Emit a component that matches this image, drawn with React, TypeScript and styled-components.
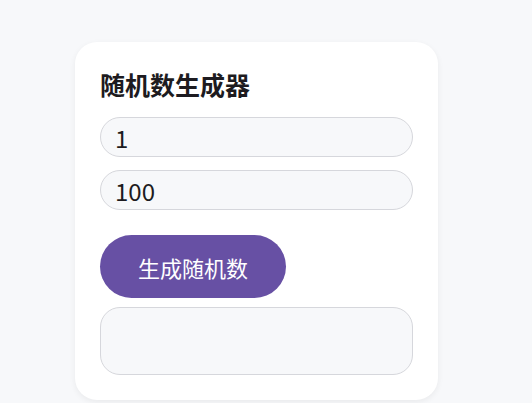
import React, { useState } from 'react';
import styled, { createGlobalStyle } from 'styled-components';

const GlobalStyle = createGlobalStyle`
    html, body {
        margin: 0;
        padding: 0;
        background: #f7f8fa;
        font-family: "Noto Sans CJK SC", "Noto Sans", sans-serif;
        color: #1d1b20;
    }
`;

const App = () => {
    const [min, setMin] = useState('1');
    const [max, setMax] = useState('100');
    const [result, setResult] = useState('');

    const generate = () => {
        const lo = parseInt(min, 10);
        const hi = parseInt(max, 10);
        if (isNaN(lo) || isNaN(hi)) return;
        setResult(String(Math.floor(Math.random() * (hi - lo + 1)) + lo));
    };

    return (
        <>
            <GlobalStyle />
            <Page>
                <Card>
                    <Title>随机数生成器</Title>
                    <NumberInput value={min} onChange={e => setMin(e.target.value)} />
                    <NumberInput value={max} onChange={e => setMax(e.target.value)} />
                    <GenerateButton onClick={generate}>生成随机数</GenerateButton>
                    <ResultBox>{result}</ResultBox>
                </Card>
            </Page>
        </>
    );
};

const Page = styled.div`
    padding: 42px 0 0 75px;
    min-height: 100vh;
    box-sizing: border-box;
`;

const Card = styled.div`
    width: 363px;
    box-sizing: border-box;
    background: #ffffff;
    border-radius: 22px;
    padding: 27px 25px 25px 25px;
    display: flex;
    flex-direction: column;
    box-shadow: 0 2px 6px rgba(0, 0, 0, 0.06);
`;

const Title = styled.h1`
    margin: 0 0 18px 0;
    font-size: 25px;
    line-height: 30px;
    font-weight: 700;
    color: #1d1b20;
`;

const NumberInput = styled.input`
    height: 40px;
    box-sizing: border-box;
    border: 1.5px solid #d6d7dc;
    border-radius: 20px;
    background: #f7f8fa;
    padding: 0 14px;
    font-family: inherit;
    font-size: 24px;
    color: #1d1b20;
    outline: none;
    & + & {
        margin-top: 13px;
    }
`;

const GenerateButton = styled.button`
    align-self: flex-start;
    margin-top: 25px;
    width: 186px;
    height: 63px;
    border: none;
    border-radius: 32px;
    background: #6750a4;
    color: #ffffff;
    font-family: inherit;
    font-size: 22px;
    font-weight: 400;
    cursor: pointer;
`;

const ResultBox = styled.div`
    margin-top: 9px;
    height: 68px;
    box-sizing: border-box;
    border: 1.5px solid #d6d7dc;
    border-radius: 20px;
    background: #f7f8fa;
    padding: 0 14px;
    display: flex;
    align-items: center;
    font-size: 24px;
`;

export default App;
